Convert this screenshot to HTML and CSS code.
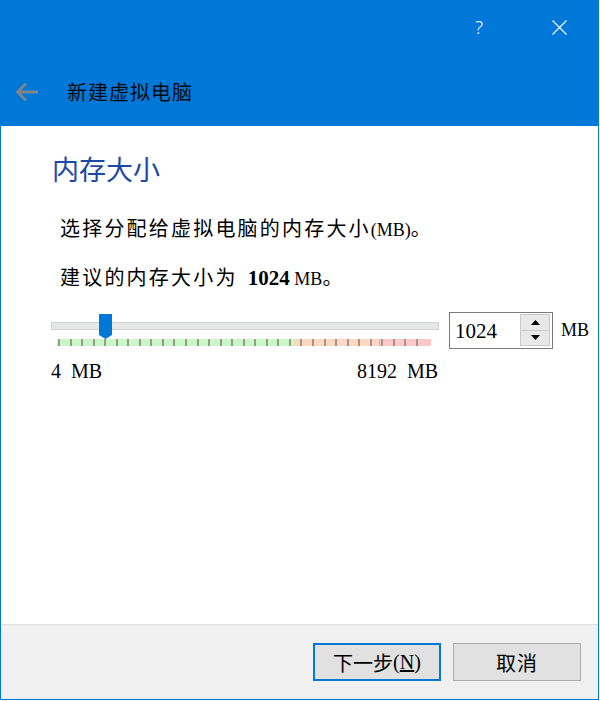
FILE: index.html
```html
<!DOCTYPE html>
<html lang="zh-CN">
<head>
<meta charset="utf-8">
<title>新建虚拟电脑</title>
<link rel="stylesheet" href="styles.css">
</head>
<body>
<div class="window">
  <div class="titlebar">
    <div class="caption">
      <div class="cap-btn help">?</div>
      <div class="cap-btn close">
        <svg width="15" height="15" viewBox="0 0 15 15"><path d="M0.5 0.5L14.5 14.5M14.5 0.5L0.5 14.5" stroke="#ffffff" stroke-width="1.1" fill="none"/></svg>
      </div>
    </div>
    <div class="header">
      <svg class="back" width="24" height="20" viewBox="0 0 24 20"><path d="M2.5 10H23M11 1.5L2.5 10L11 18.5" fill="none" stroke="#808589" stroke-width="2.8"/></svg>
      <div class="title">新建虚拟电脑</div>
    </div>
  </div>
  <div class="content">
    <h1 class="heading">内存大小</h1>
    <p class="text">选择分配给虚拟电脑的内存大小<span class="lat">(MB)</span>。</p>
    <p class="text second">建议的内存大小为<span class="lat num"> <b>1024</b></span><span class="lat"> MB</span>。</p>
    <div class="slider-row">
      <div class="slider">
        <div class="track"></div>
        <svg class="handle" width="13" height="25" viewBox="0 0 13 25"><polygon points="0,0 13,0 13,21 6.5,25 0,21" fill="#0078d7"/></svg>
        <div class="band">
          <span class="tick"></span><span class="tick"></span><span class="tick"></span><span class="tick"></span>
          <span class="tick"></span><span class="tick"></span><span class="tick"></span><span class="tick"></span>
          <span class="tick"></span><span class="tick"></span><span class="tick"></span><span class="tick"></span>
          <span class="tick"></span><span class="tick"></span><span class="tick"></span><span class="tick"></span>
          <span class="tick"></span><span class="tick"></span><span class="tick"></span><span class="tick"></span>
          <span class="tick"></span><span class="tick"></span><span class="tick"></span><span class="tick"></span>
          <span class="tick"></span><span class="tick"></span><span class="tick"></span><span class="tick"></span>
          <span class="tick"></span><span class="tick"></span><span class="tick"></span><span class="tick"></span>
        </div>
        <div class="scale"><span>4&nbsp; MB</span><span>8192&nbsp; MB</span></div>
      </div>
      <div class="spin">
        <div class="spin-val">1024</div>
        <div class="spin-btns">
          <div class="spin-btn"><svg width="9" height="5" viewBox="0 0 9 5"><polygon points="0,5 9,5 4.5,0" fill="#000"/></svg></div>
          <div class="spin-btn"><svg width="9" height="5" viewBox="0 0 9 5"><polygon points="0,0 9,0 4.5,5" fill="#000"/></svg></div>
        </div>
      </div>
      <div class="unit">MB</div>
    </div>
  </div>
  <div class="footer">
    <button class="btn primary">下一步<span class="lat">(<u>N</u>)</span></button>
    <button class="btn">取消</button>
  </div>
</div>
</body>
</html>
```
FILE: styles.css
```css
html, body {
  margin: 0;
  padding: 0;
  background: #ffffff;
}

.window {
  width: 599px;
  height: 700px;
  box-sizing: border-box;
  border: 1px solid #0078d7;
  border-top: 0;
  display: flex;
  flex-direction: column;
  font-family: "Liberation Serif", "Noto Sans CJK SC", serif;
  color: #000;
}

.titlebar {
  background: #0078d7;
  height: 126px;
  display: flex;
  flex-direction: column;
}

.caption {
  height: 54px;
  display: flex;
  justify-content: flex-end;
  gap: 34px;
  padding-right: 16px;
}

.cap-btn {
  width: 46px;
  display: flex;
  align-items: center;
  justify-content: center;
  color: #f2f7fc;
}

.help {
  font-family: "Noto Sans", sans-serif;
  font-size: 19px;
  font-weight: 300;
}

.header {
  flex: 1;
  display: flex;
  align-items: center;
  padding: 4px 0 0 14px;
}

.back {
  display: block;
}

.title {
  margin-left: 28px;
  font-family: "Noto Sans CJK SC", sans-serif;
  font-size: 20px;
  line-height: 28px;
  letter-spacing: 1px;
  color: #050a10;
}

.content {
  flex: 1;
  background: #ffffff;
  padding: 26px 0 0 50px;
}

.heading {
  margin: 0 0 0 1px;
  font-family: "Noto Sans CJK SC", sans-serif;
  font-size: 27px;
  line-height: 34px;
  font-weight: 400;
  color: #1c48a6;
}

.text {
  margin: 27px 0 0 9px;
  height: 30px;
  font-family: "Noto Sans CJK SC", sans-serif;
  font-size: 20px;
  line-height: 30px;
  letter-spacing: 2.2px;
}

.text.second {
  margin-top: 19px;
}

.lat {
  font-family: "Liberation Serif", serif;
  font-size: 18px;
  line-height: 18px;
  letter-spacing: 0;
}

.num {
  font-size: 21px;
}

.num b {
  margin-left: 5px;
}

.slider-row {
  display: flex;
  align-items: flex-start;
  margin-top: 20px;
}

.slider {
  width: 388px;
  position: relative;
}

.track {
  margin-top: 10px;
  height: 8px;
  box-sizing: border-box;
  background: #e6e8e8;
  border: 1px solid #d0d2d2;
}

.handle {
  position: absolute;
  left: 48px;
  top: 2px;
  display: block;
}

.band {
  margin: 9px 0 0 6px;
  width: 374px;
  height: 7px;
  box-sizing: border-box;
  padding: 0 13px 0 1px;
  display: flex;
  justify-content: space-between;
  background: linear-gradient(to right,
    #c8f7c8 0, #c8f7c8 237px,
    #e2e6a6 237px, #e2e6a6 238px,
    #ffd7c2 238px, #ffd7c2 322px,
    #ff9f9f 322px, #ff9f9f 323px,
    #ffc7c7 323px, #ffc7c7 100%);
}

.tick {
  width: 2px;
  height: 7px;
  background: #9d978c;
}

.scale {
  width: 387px;
  display: flex;
  justify-content: space-between;
  margin-top: 13px;
  font-size: 20px;
  line-height: 24px;
}

.spin {
  margin-left: 10px;
  width: 104px;
  height: 37px;
  box-sizing: border-box;
  border: 1px solid #7a7a7a;
  background: #ffffff;
  display: flex;
  align-items: center;
}

.spin-val {
  flex: 1;
  padding-left: 5px;
  font-size: 21px;
  line-height: 24px;
}

.spin-btns {
  align-self: stretch;
  width: 30px;
  margin-right: 2px;
  padding: 1px 0 2px;
  display: flex;
  flex-direction: column;
}

.spin-btn {
  flex: 1;
  background: #e8e8e8;
  border: 1px solid #c9c9c9;
  display: flex;
  align-items: center;
  justify-content: center;
}

.spin-btn + .spin-btn {
  border-top: 0;
}

.spin-btn svg {
  display: block;
}

.unit {
  margin-left: 8px;
  font-size: 18px;
  line-height: 37px;
}

.footer {
  height: 75px;
  box-sizing: border-box;
  border-top: 1px solid #dfdfdf;
  background: #f0f0f0;
  display: flex;
  justify-content: flex-end;
  align-items: flex-start;
  gap: 12px;
  padding: 18px 17px 0 0;
}

.btn {
  width: 128px;
  height: 38px;
  box-sizing: border-box;
  margin: 0;
  padding: 0;
  background: #e1e1e1;
  border: 1px solid #adadad;
  border-radius: 0;
  font-family: "Noto Sans CJK SC", sans-serif;
  font-size: 20px;
  letter-spacing: 1px;
  color: #000;
  display: flex;
  align-items: center;
  justify-content: center;
}

.btn.primary {
  border: 2px solid #0078d7;
  letter-spacing: 0;
}

.btn .lat {
  font-size: 20px;
  line-height: 20px;
}
```
